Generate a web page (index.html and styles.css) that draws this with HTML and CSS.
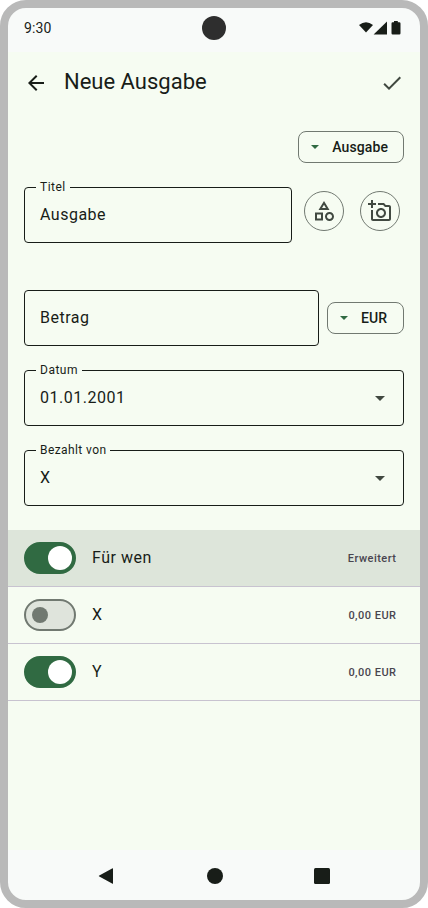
FILE: index.html
```html
<!DOCTYPE html>
<html lang="de">
<head>
<meta charset="utf-8">
<title>Neue Ausgabe</title>
<link rel="stylesheet" href="styles.css">
</head>
<body>
<div class="device">
  <header class="status">
    <span class="time">9:30</span>
    <span class="camera"></span>
    <svg class="signals" width="42" height="16" viewBox="0 0 42 16">
      <path d="M0 5Q7 -.6 14 5L7 12.400z"/>
      <path d="M28 1.500v13H14.600z"/>
      <path d="M35 1h3.800v1.300h1.500q1.200 0 1.200 1.200v9.800q0 1.200-1.200 1.200h-6.600q-1.200 0-1.200-1.200V3.500q0-1.200 1.200-1.200H35z"/>
    </svg>
  </header>

  <main class="screen">
    <div class="appbar">
      <svg class="icon dark" viewBox="0 0 24 24"><path d="M7.825 13l5.6 5.6L12 20l-8-8 8-8 1.425 1.4L7.825 11H20v2z"/></svg>
      <h1>Neue Ausgabe</h1>
      <svg class="icon" viewBox="0 0 24 24"><path d="M9 16.17L4.83 12l-1.42 1.41L9 19 21 7l-1.41-1.41z"/></svg>
    </div>

    <div class="type-row">
      <button class="chip"><svg viewBox="0 0 18 18"><path d="M5 7l4 4 4-4z"/></svg>Ausgabe</button>
    </div>

    <div class="title-row">
      <div class="field"><span class="label">Titel</span><span>Ausgabe</span></div>
      <button class="round"><svg class="icon" viewBox="0 0 24 24"><path d="M12 2l-5.500 9h11L12 2zm0 3.840L13.930 9h-3.870L12 5.840zM17.500 13c-2.490 0-4.500 2.010-4.500 4.500s2.010 4.500 4.500 4.500 4.500-2.010 4.500-4.500-2.010-4.500-4.500-4.500zm0 7c-1.380 0-2.500-1.120-2.500-2.500s1.120-2.500 2.500-2.500 2.500 1.120 2.500 2.500-1.120 2.500-2.500 2.500zM3 21.500h8v-8H3v8zm2-6h4v4H5v-4z"/></svg></button>
      <button class="round"><svg class="icon" viewBox="0 0 24 24"><path d="M21 6h-3.170L16 4h-6v2h5.120l1.830 2H21v12H5v-9H3v9c0 1.100.9 2 2 2h16c1.100 0 2-.9 2-2V8c0-1.100-.9-2-2-2zM8 14c0 2.760 2.240 5 5 5s5-2.240 5-5-2.240-5-5-5-5 2.240-5 5zm5-3c1.650 0 3 1.350 3 3s-1.350 3-3 3-3-1.350-3-3 1.350-3 3-3zM5 6h3V4H5V1H3v3H0v2h3v3h2z"/></svg></button>
    </div>

    <div class="amount-row">
      <div class="field"><span>Betrag</span></div>
      <button class="chip currency"><svg viewBox="0 0 18 18"><path d="M5 7l4 4 4-4z"/></svg>EUR</button>
    </div>

    <div class="selects">
      <div class="field"><span class="label">Datum</span><span>01.01.2001</span><svg class="icon" viewBox="0 0 24 24"><path d="M7 10l5 5 5-5z"/></svg></div>
      <div class="field"><span class="label narrow">Bezahlt von</span><span>X</span><svg class="icon" viewBox="0 0 24 24"><path d="M7 10l5 5 5-5z"/></svg></div>
    </div>

    <ul class="people">
      <li class="head"><span class="switch on"></span><span class="name">Für wen</span><span class="value">Erweitert</span></li>
      <li><span class="switch"></span><span class="name">X</span><span class="value">0,00 EUR</span></li>
      <li><span class="switch on"></span><span class="name">Y</span><span class="value">0,00 EUR</span></li>
    </ul>
  </main>

  <nav class="navbar">
    <svg viewBox="0 0 16 16"><path d="M15 .8v14.400q0 .9-.9.400L1.300 8.600q-1-.6 0-1.200L14.100.4q.9-.5.9.4z"/></svg>
    <svg viewBox="0 0 16 16"><circle cx="8" cy="8" r="8"/></svg>
    <svg viewBox="0 0 16 16"><rect width="16" height="16" rx="1.500"/></svg>
  </nav>
</div>
</body>
</html>
```

FILE: styles.css
```css
* { box-sizing: border-box; }

body {
  margin: 0;
  background: #fff;
  color: #181d18;
  font-family: Roboto, "Liberation Sans", sans-serif;
  font-size: 16px;
  line-height: 24px;
  letter-spacing: 0.5px;
}

.device {
  display: flex;
  flex-direction: column;
  width: 428px;
  height: 908px;
  border: 8px solid #b9b9b9;
  border-radius: 26px;
  background: #f8faf9;
  overflow: hidden;
}

.status {
  display: grid;
  grid-template-columns: 1fr 24px 1fr;
  align-items: center;
  height: 44px;
  padding: 0 19px 4px 16px;
}
.time { font-size: 14px; line-height: 20px; letter-spacing: 0.14px; }
.camera { width: 24px; height: 24px; border-radius: 50%; background: #2e2e2e; margin-left: 1.5px; }
.signals { justify-self: end; fill: #181d18; }

.screen { flex: 1; background: #f6fcf2; }

.icon { display: block; flex: none; width: 24px; height: 24px; fill: #414941; }
.icon.dark { fill: #181d18; }

.appbar {
  display: flex;
  align-items: center;
  gap: 16px;
  height: 62px;
  padding: 0 16px;
}
h1 { flex: 1; margin: 0; padding-bottom: 2px; font-size: 22px; line-height: 28px; font-weight: 400; letter-spacing: 0; }

.type-row { display: flex; justify-content: flex-end; padding: 17px 16px 0; }

button { color: inherit; font-family: inherit; background: none; border: 1px solid #717971; padding: 0; }
.chip {
  display: flex;
  flex: none;
  align-items: center;
  gap: 8px;
  height: 32px;
  padding: 0 15px 0 7px;
  border-radius: 8px;
  font-size: 14px;
  font-weight: 500;
  line-height: 20px;
  letter-spacing: 0.1px;
}
.chip svg { width: 18px; height: 18px; fill: #306a42; }
.chip.currency { width: 77px; }
.round { display: grid; place-items: center; flex: none; width: 40px; height: 40px; border-radius: 50%; }

.field {
  position: relative;
  display: flex;
  flex: 1;
  align-items: center;
  justify-content: space-between;
  height: 56px;
  padding: 0 11px 0 15px;
  border: 1px solid #181d18;
  border-radius: 4px;
}
.label {
  position: absolute;
  top: -9px;
  left: 11px;
  padding: 0 4px;
  background: #f6fcf2;
  font-size: 12px;
  line-height: 16px;
}
.label.narrow { padding-right: 3.5px; letter-spacing: 0.42px; }

.title-row { display: flex; align-items: center; padding: 24px 20px 0 16px; }
.title-row .field { margin-right: 12px; }
.title-row .round { margin-bottom: 8px; }
.title-row .round + .round { margin-left: 16px; }

.amount-row { display: flex; align-items: center; gap: 8px; padding: 47px 16px 0; }

.selects { display: grid; gap: 24px; padding: 24px 16px; }

.people { margin: 0; padding: 0; list-style: none; }
.people li {
  display: flex;
  align-items: center;
  gap: 16px;
  height: 57px;
  padding: 0 23.5px 0 16px;
  border-bottom: 1px solid #c8c3d0;
}
.people .head { background: #dde5da; }
.name { flex: 1; }
.value { padding-top: 2px; color: #49454f; font-size: 11px; font-weight: 500; line-height: 16px; letter-spacing: 0.48px; }

.switch {
  display: flex;
  align-items: center;
  width: 52px;
  height: 32px;
  padding-left: 6px;
  border: 2px solid #717971;
  border-radius: 16px;
  background: #dfe4dc;
}
.switch::before { content: ""; width: 16px; height: 16px; border-radius: 50%; background: #717971; }
.switch.on { padding-left: 22px; border-color: #306a42; background: #306a42; }
.switch.on::before { width: 24px; height: 24px; background: #fff; }

.navbar {
  display: flex;
  align-items: center;
  justify-content: space-between;
  height: 50px;
  padding: 2px 90px 0 90px;
}
.navbar svg { width: 16px; height: 16px; fill: #181d18; }
.navbar svg:nth-child(2) { margin-left: 2px; }
```
